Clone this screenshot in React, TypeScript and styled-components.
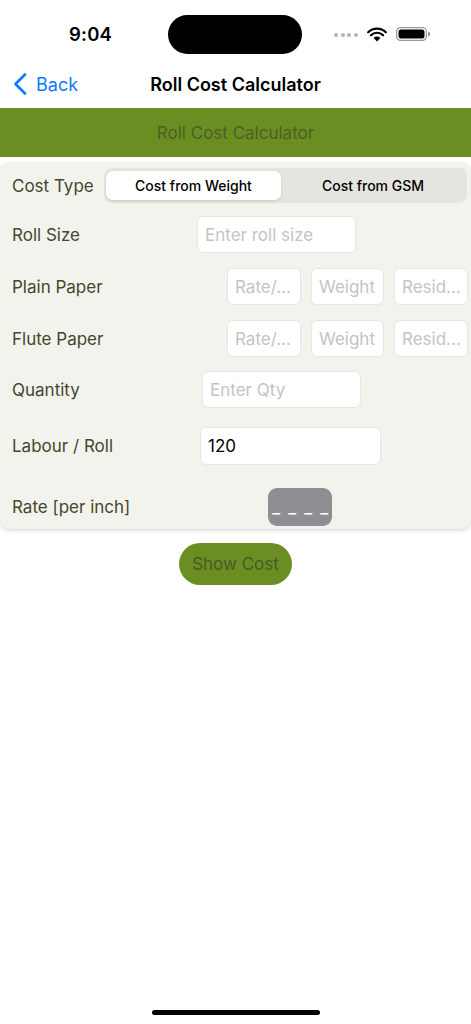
import React from "react";
import styled, { createGlobalStyle } from "styled-components";

const Global = createGlobalStyle`
  html, body { margin: 0; padding: 0; background: #ffffff; }
  body { font-family: Inter, "Liberation Sans", sans-serif; -webkit-font-smoothing: antialiased; }
  * { box-sizing: border-box; }
`;

const Screen = styled.div`
  width: 471px;
  min-height: 1024px;
  display: flex;
  flex-direction: column;
  background: #ffffff;
`;

const StatusBar = styled.div`
  height: 60px;
  display: flex;
  align-items: center;
`;

const Time = styled.div`
  width: 180px;
  padding-left: 69px;
  font-size: 18.5px;
  font-weight: 600;
  color: #000;
  margin-top: 8px;
  letter-spacing: 0.2px;
`;

const Island = styled.div`
  width: 134px;
  height: 39px;
  border-radius: 20px;
  background: #000;
  margin-left: -12px;
  margin-top: 9px;
`;

const StatusIcons = styled.div`
  display: flex;
  align-items: center;
  margin-left: 32px;
  margin-top: 8px;
  gap: 9px;
`;

const Dots = styled.div`
  display: flex;
  gap: 2.5px;
  margin-top: 2px;
  span {
    width: 4px;
    height: 4px;
    border-radius: 2px;
    background: #b3b3b3;
  }
`;

const NavBar = styled.div`
  height: 48px;
  display: grid;
  grid-template-columns: 1fr auto 1fr;
  align-items: center;
`;

const BackButton = styled.div`
  display: flex;
  align-items: center;
  gap: 9px;
  padding-left: 13px;
  color: #0a7aff;
  font-size: 18px;
`;

const NavTitle = styled.div`
  font-size: 18px;
  font-weight: 600;
  color: #000;
`;

const Banner = styled.div`
  height: 49px;
  background: #6b8e23;
  color: #4e5e28;
  font-size: 17px;
  display: flex;
  align-items: center;
  justify-content: center;
`;

const Card = styled.div`
  margin-top: 6px;
  background: #f3f3ee;
  border-radius: 10px;
  box-shadow: 0 1px 5px rgba(0, 0, 0, 0.18);
  padding: 5px 4px 3px 0;
  display: flex;
  flex-direction: column;
`;

const Row = styled.div<{ $top?: number; $h: number }>`
  display: flex;
  align-items: center;
  height: ${(p) => p.$h}px;
  margin-top: ${(p) => p.$top ?? 0}px;
  padding-left: 12px;
`;

const Label = styled.div<{ $w: number }>`
  width: ${(p) => p.$w}px;
  flex: 0 0 auto;
  font-size: 17px;
  color: #43472b;
`;

const Segmented = styled.div`
  flex: 1;
  height: 35px;
  background: #e5e5e0;
  border-radius: 8px;
  padding: 3px 2px;
  display: grid;
  grid-template-columns: 175px 1fr;
`;

const Segment = styled.div<{ $active?: boolean }>`
  display: flex;
  align-items: center;
  justify-content: center;
  border-radius: 7px;
  font-size: 14px;
  font-weight: 500;
  color: #000;
  background: ${(p) => (p.$active ? "#ffffff" : "transparent")};
  box-shadow: ${(p) => (p.$active ? "0 1px 3px rgba(0,0,0,0.12)" : "none")};
`;

const Input = styled.input<{ $w: number; $h?: number }>`
  width: ${(p) => p.$w}px;
  height: ${(p) => p.$h ?? 37}px;
  border: 1px solid #e6e6e2;
  border-radius: 6px;
  background: #ffffff;
  font-family: inherit;
  font-size: 17px;
  color: #000;
  padding: 0 7px;
  outline: none;
  &::placeholder { color: #c4c4c6; }
`;

const Inputs = styled.div`
  display: flex;
  gap: 10px;
`;

const RateBox = styled.div`
  width: 64px;
  height: 38px;
  border-radius: 9px;
  background: #8e8e93;
  color: #ffffff;
  font-size: 17px;
  font-weight: 500;
  display: flex;
  align-items: flex-end;
  justify-content: center;
  padding: 0 0 9px 2px;
  letter-spacing: 1.8px;
  white-space: pre;
`;

const ButtonWrap = styled.div`
  display: flex;
  justify-content: center;
  margin-top: 14px;
`;

const ShowButton = styled.button`
  width: 113px;
  height: 42px;
  border-radius: 21px;
  border: none;
  background: #6b8e23;
  color: #4a5a24;
  font-family: inherit;
  font-size: 17px;
`;

const HomeIndicator = styled.div`
  margin: auto auto 9px auto;
  width: 168px;
  height: 5px;
  border-radius: 3px;
  background: #000;
`;

export default function App() {
  return (
    <>
      <Global />
      <Screen>
        <StatusBar>
          <Time>9:04</Time>
          <Island />
          <StatusIcons>
            <Dots>
              <span />
              <span />
              <span />
              <span />
            </Dots>
            <svg width="20" height="15" viewBox="0 0 20 15">
              <path d="M10 14.5 L6.6 10.9 A4.8 4.8 0 0 1 13.4 10.9 Z" fill="#000" />
              <path d="M3.9 8.3 A8.6 8.6 0 0 1 16.1 8.3" stroke="#000" strokeWidth="2.2" fill="none" strokeLinecap="round" />
              <path d="M1.2 5.2 A12.6 12.6 0 0 1 18.8 5.2" stroke="#000" strokeWidth="2.2" fill="none" strokeLinecap="round" />
            </svg>
            <svg width="34" height="14" viewBox="0 0 34 14">
              <rect x="0.6" y="0.6" width="29.8" height="12.8" rx="4" fill="none" stroke="#9a9a9a" strokeWidth="1.2" />
              <rect x="2.5" y="2.5" width="26" height="9" rx="2.5" fill="#000" />
              <path d="M32 4.7 A2.2 2.2 0 0 1 32 9.3 Z" fill="#9a9a9a" />
            </svg>
          </StatusIcons>
        </StatusBar>
        <NavBar>
          <BackButton>
            <svg width="14" height="22" viewBox="0 0 14 22">
              <path d="M12 1.5 L2.5 11 L12 20.5" stroke="#0a7aff" strokeWidth="2.6" fill="none" strokeLinecap="round" strokeLinejoin="round" />
            </svg>
            <span>Back</span>
          </BackButton>
          <NavTitle>Roll Cost Calculator</NavTitle>
          <div />
        </NavBar>
        <Banner>Roll Cost Calculator</Banner>
        <Card>
          <Row $h={35}>
            <Label $w={92}>Cost Type</Label>
            <Segmented>
              <Segment $active>Cost from Weight</Segment>
              <Segment>Cost from GSM</Segment>
            </Segmented>
          </Row>
          <Row $h={37} $top={13}>
            <Label $w={185}>Roll Size</Label>
            <Input $w={159} placeholder="Enter roll size" />
          </Row>
          <Row $h={37} $top={15}>
            <Label $w={215}>Plain Paper</Label>
            <Inputs>
              <Input $w={74} placeholder="Rate/..." />
              <Input $w={73} placeholder="Weight" />
              <Input $w={74} placeholder="Resid..." />
            </Inputs>
          </Row>
          <Row $h={37} $top={15}>
            <Label $w={215}>Flute Paper</Label>
            <Inputs>
              <Input $w={74} placeholder="Rate/..." />
              <Input $w={73} placeholder="Weight" />
              <Input $w={74} placeholder="Resid..." />
            </Inputs>
          </Row>
          <Row $h={37} $top={14}>
            <Label $w={190}>Quantity</Label>
            <Input $w={159} placeholder="Enter Qty" />
          </Row>
          <Row $h={38} $top={19}>
            <Label $w={188}>Labour / Roll</Label>
            <Input $w={181} $h={38} defaultValue="120" />
          </Row>
          <Row $h={38} $top={23}>
            <Label $w={256}>Rate [per inch]</Label>
            <RateBox>_ _ _ _</RateBox>
          </Row>
        </Card>
        <ButtonWrap>
          <ShowButton>Show Cost</ShowButton>
        </ButtonWrap>
        <HomeIndicator />
      </Screen>
    </>
  );
}
